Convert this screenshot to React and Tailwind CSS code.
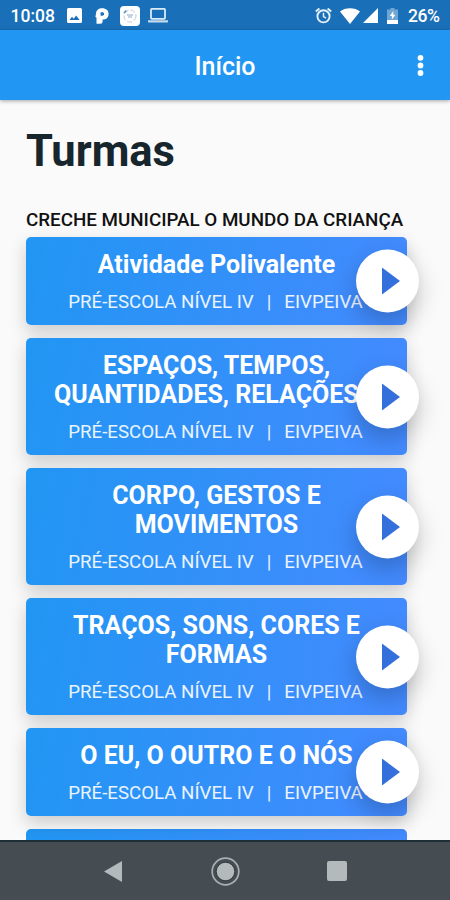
import React from 'react';

const turmas = [
  { id: 1, lines: ['Atividade Polivalente'] },
  { id: 2, lines: ['ESPAÇOS, TEMPOS,', 'QUANTIDADES, RELAÇÕES E'] },
  { id: 3, lines: ['CORPO, GESTOS E', 'MOVIMENTOS'] },
  { id: 4, lines: ['TRAÇOS, SONS, CORES E', 'FORMAS'] },
  { id: 5, lines: ['O EU, O OUTRO E O NÓS'] },
];

const StatusBar = () => (
  <div className="flex h-[30px] shrink-0 items-center bg-[#1a70b8] pl-[10.5px] pr-[9px] text-white">
    <span className="w-[56.5px] text-[17.5px] font-medium leading-none pt-[3px]">10:08</span>
    {/* picture */}
    <svg className="mt-[1px] h-[15px] w-[15px]" viewBox="0 0 15 15">
      <path fillRule="evenodd" fill="#fff" d="M1.5 0h12A1.5 1.5 0 0 1 15 1.500v12a1.500 1.500 0 0 1-1.500 1.500h-12A1.500 1.500 0 0 1 0 13.500v-12A1.500 1.500 0 0 1 1.500 0zM2.500 12h10L9.200 7.600 6.700 10.700 5 8.700z" />
    </svg>
    {/* parking style badge */}
    <svg className="ml-[13px] mt-[1px] h-[16px] w-[14px]" viewBox="0 0 14 16">
      <path fillRule="evenodd" fill="#fff" d="M1 5.500C1.200 2.200 3.600.2 7.200.2c3.800 0 6.400 2.200 6.400 5.700 0 3.500-2.400 5.700-6 5.700v1.800A2.200 2.200 0 0 1 5.400 15.700H1.500V9.500L.4 9zM5.600 4.300v3.400h1.600c1.200 0 1.900-.6 1.900-1.700s-.7-1.700-1.900-1.700z" />
    </svg>
    <svg className="ml-[11px] mt-[1px] h-[20px] w-[20px]" viewBox="0 0 20 20">
      <rect width="20" height="20" rx="4" fill="#fff" />
      <circle cx="10" cy="10" r="6" fill="none" stroke="#bccfde" strokeWidth="1" strokeDasharray="5 2" />
      <path d="M7 9h6M8 11h4" stroke="#b0c8da" strokeWidth="1.300" />
      <path d="M4 7l2.200-2.500" stroke="#4b8abf" strokeWidth="1.400" />
    </svg>
    {/* laptop */}
    <svg className="ml-[8px] mt-[1px] h-[15px] w-[20px]" viewBox="0 0 20 15">
      <rect x="3" y="0.900" width="14" height="10" rx="0.800" fill="none" stroke="#dcebf7" strokeWidth="1.800" />
      <path d="M0 12.200h20v1.200a1.200 1.200 0 0 1-1.200 1.200H1.200A1.200 1.200 0 0 1 0 13.400z" fill="#c3dbef" />
    </svg>

    <div className="ml-auto flex items-center">
      <svg className="mt-[1px] h-[17px] w-[17px]" viewBox="0 0 17 17" fill="none" stroke="#e6f1fa">
        <circle cx="8.500" cy="9.300" r="6.100" strokeWidth="1.900" />
        <path d="M8.500 5.800v3.800l2.600 1.500" strokeWidth="1.500" />
        <path d="M0.800 4.500l3.600-3M16.200 4.500l-3.600-3" strokeWidth="1.900" />
      </svg>
      <svg className="ml-[8px] mt-[1px] h-[16px] w-[20px]" viewBox="0 0 20 16">
        <path d="M10 16L0 3.500C2.500 1.400 6 .2 10 .2s7.500 1.200 10 3.300z" fill="#fff" />
      </svg>
      <svg className="ml-[3px] mt-[1px] h-[15px] w-[15px]" viewBox="0 0 15 15">
        <path d="M15 0v15H0z" fill="#fff" />
      </svg>
      <svg className="ml-[9px] mt-[1px] h-[16px] w-[11px]" viewBox="0 0 11 16">
        <path d="M3.500 0h4v1.500H11V12H0V1.500h3.500z" fill="#6fa6d4" />
        <path d="M0 12h11v4H0z" fill="#fff" />
        <path d="M6.300 3L2.800 8h2.100v3.500L8.400 6.800H6.300z" fill="#fff" />
      </svg>
      <span className="ml-[10px] w-[33px] whitespace-nowrap pt-[3px] text-[17.500px] font-medium leading-none tracking-[-0.4px]">26%</span>
    </div>
  </div>
);

const AppBar = () => (
  <header className="relative z-10 flex h-[70px] shrink-0 items-center justify-center bg-[#2196f3] text-white shadow-[0_1px_4px_rgba(0,0,0,0.35)]">
    <h1 className="pt-[2px] text-[25px] font-medium leading-none">Início</h1>
    <button className="absolute right-[26px] top-[24px]" aria-label="Menu">
      <svg className="h-[22px] w-[8px]" viewBox="0 0 8 22" fill="#fff">
        <circle cx="4.500" cy="3.800" r="2.900" />
        <circle cx="4.500" cy="11.500" r="2.900" />
        <circle cx="4.500" cy="19" r="2.900" />
      </svg>
    </button>
  </header>
);

const TurmaCard = ({ lines }) => (
  <div className="relative rounded-[5px] bg-linear-[100deg] from-[#2196f3] to-[#448aff] px-2 pb-[11px] pt-[13px] text-center text-white shadow-[0_7px_18px_rgba(0,0,0,0.19)]">
    <h3 className="-mx-4 text-[25px] font-bold leading-[29px]">
      {lines.map((line) => (
        <span key={line} className="block whitespace-nowrap">{line}</span>
      ))}
    </h3>
    <p className="-ml-[2px] mt-[12px] flex justify-center whitespace-nowrap text-[18.700px] leading-[23px] text-white/90">
      <span>PRÉ-ESCOLA NÍVEL IV</span>
      <span className="mx-[13px]">|</span>
      <span>EIVPEIVA</span>
    </p>
    <button
      className="absolute -right-[12px] top-1/2 flex h-[63px] w-[63px] -translate-y-1/2 items-center justify-center rounded-full bg-white shadow-[0_10px_24px_rgba(0,0,0,0.22)]"
      aria-label="Abrir turma"
    >
      <svg className="ml-[6px] h-[27px] w-[18px]" viewBox="0 0 18 27">
        <path d="M0 0v27L18 13.500z" fill="#346fdb" />
      </svg>
    </button>
  </div>
);

const NavBar = () => (
  <nav className="relative flex h-[60px] shrink-0 items-center border-t-2 border-[#1d2e35] bg-[#454c52]">
    <svg className="ml-[104px] h-[21px] w-[18px]" viewBox="0 0 18 21">
      <path d="M18 0v21L0 10.500z" fill="#b4b9bc" />
    </svg>
    <svg className="ml-[89px] h-[29px] w-[29px]" viewBox="0 0 29 29">
      <circle cx="14.500" cy="14.500" r="13.300" fill="none" stroke="#a9afb2" strokeWidth="1.700" />
      <circle cx="14.500" cy="14.500" r="9.300" fill="#b4b9bc" stroke="#343b40" />
    </svg>
    <div className="ml-[87px] h-[20px] w-[20px] rounded-[2px] bg-[#b4b9bc]"></div>
  </nav>
);

const App = () => {
  return (
    <div className="flex h-[900px] w-[450px] flex-col overflow-hidden bg-[#fafafa] font-['Roboto',sans-serif]">
      <StatusBar />
      <AppBar />
      <main className="min-h-0 flex-1 overflow-hidden pl-[26px] pr-[43px]">
        <h2 className="mt-[26px] text-[43.500px] font-bold leading-[52px] text-[#17252c]">Turmas</h2>
        <h4 className="mt-[30.500px] whitespace-nowrap text-[18.800px] font-medium leading-[22px] text-[#111]">
          CRECHE MUNICIPAL O MUNDO DA CRIANÇA
        </h4>
        <div className="mt-[6.500px] flex flex-col gap-[13px]">
          {turmas.map((turma) => (
            <TurmaCard key={turma.id} lines={turma.lines} />
          ))}
          <div className="h-[88px] rounded-[5px] bg-linear-[100deg] from-[#2196f3] to-[#448aff]"></div>
        </div>
      </main>
      <NavBar />
    </div>
  );
};

export default App;
